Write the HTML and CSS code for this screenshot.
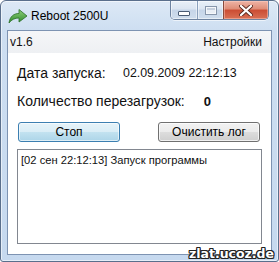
FILE: index.html
```html
<!DOCTYPE html>
<html lang="ru">
<head>
  <meta charset="UTF-8" />
  <title>Reboot 2500U</title>
  <link rel="stylesheet" href="styles.css">
</head>
<body>

  <div class="window">
    <div class="titlebar">
      <svg class="app-icon" width="20" height="16" viewBox="0 0 20 16">
        <defs>
          <linearGradient id="arrowFill" x1="0" y1="0" x2="0" y2="1">
            <stop offset="0" stop-color="#8fd07a"/>
            <stop offset="1" stop-color="#2f8a2c"/>
          </linearGradient>
        </defs>
        <path d="M1 15 C2 8 6 5.5 11 5.5 L11 1.5 L19 8 L11 14 L11 10 C7 10 3.5 11.5 1 15 Z" fill="url(#arrowFill)" stroke="#2b6e28" stroke-width="0.8" stroke-linejoin="round"/>
      </svg>
      <span class="title">Reboot 2500U</span>

      <div class="caption-buttons">
        <div class="cap-btn cap-min"><span class="glyph-min"></span></div>
        <div class="cap-btn cap-max"><span class="glyph-max"></span></div>
        <div class="cap-btn cap-close">
          <svg width="14" height="11" viewBox="0 0 14 11">
            <path d="M2 1 L12 10 M12 1 L2 10" stroke="#5a2a20" stroke-width="4" stroke-linecap="round"/>
            <path d="M2 1 L12 10 M12 1 L2 10" stroke="#ffffff" stroke-width="2.3" stroke-linecap="round"/>
          </svg>
        </div>
      </div>
    </div>

    <div class="client">
      <div class="menubar">
        <span class="menu-item">v1.6</span>
        <span class="menu-item">Настройки</span>
      </div>

      <div class="info">
        <div class="info-row">
          <span class="label label-date">Дата запуска:</span>
          <span class="date">02.09.2009 22:12:13</span>
        </div>
        <div class="info-row">
          <span class="label">Количество перезагрузок:</span>
          <span class="count">0</span>
        </div>
      </div>

      <div class="actions">
        <button class="btn btn-default">Стоп</button>
        <button class="btn">Очистить лог</button>
      </div>

      <div class="log">[02 сен 22:12:13] Запуск программы</div>
    </div>

    <div class="watermark">zlat.ucoz.de</div>
  </div>

</body>
</html>
```

FILE: styles.css
```css
* {
  box-sizing: border-box;
}

body {
  margin: 0;
  background: #ffffff;
  font-family: 'Liberation Sans', Arial, sans-serif;
  color: #111;
}

.window {
  position: relative;
  width: 279px;
  height: 262px;
  border: 1px solid #5a6f8c;
  border-radius: 6px 6px 3px 3px;
  background: linear-gradient(#dde9f6 0px, #cddef1 30px, #c6d9ef 100%);
  box-shadow: inset 0 0 0 1px rgba(255, 255, 255, 0.55);
  display: flex;
  flex-direction: column;
  overflow: hidden;
}

.titlebar {
  height: 29px;
  display: flex;
  align-items: center;
  padding-left: 7px;
}

.app-icon {
  margin-top: 1px;
}

.title {
  margin-left: 3px;
  font-size: 12px;
  color: #000;
}

/* caption buttons */

.caption-buttons {
  margin-left: auto;
  margin-right: 9px;
  align-self: flex-start;
  display: flex;
  height: 19px;
  border: 1px solid #6e83a0;
  border-top: none;
  border-radius: 0 0 5px 5px;
  overflow: hidden;
  box-shadow: 0 1px 0 rgba(255, 255, 255, 0.6);
}

.cap-btn {
  height: 18px;
  display: flex;
  align-items: center;
  justify-content: center;
  background: linear-gradient(#e9f0f8 0%, #dbe5f1 45%, #c6d5e8 50%, #cfdded 100%);
  box-shadow: inset 0 0 0 1px rgba(255, 255, 255, 0.5);
}

.cap-min {
  width: 27px;
  border-right: 1px solid #8aa0bc;
}

.cap-max {
  width: 26px;
  border-right: 1px solid #8a4a3c;
}

.cap-close {
  width: 44px;
  background: linear-gradient(#eeb4a6 0%, #de8c76 45%, #cb4c33 50%, #d87055 100%);
  box-shadow: inset 0 0 0 1px rgba(255, 210, 200, 0.45);
}

.glyph-min {
  width: 12px;
  height: 5px;
  margin-top: 6px;
  background: #fff;
  border: 1px solid #4b5c74;
  border-radius: 1px;
}

.glyph-max {
  width: 12px;
  height: 9px;
  border: 1px solid #8796ab;
  background: #e9eef5;
  box-shadow: inset 0 0 0 1px #f5f7fa, inset 0 2px 0 1px #c6d0de;
}

/* client area */

.client {
  margin: 0 6px 6px 6px;
  border: 1px solid #7d93b2;
  background: #ffffff;
  height: 225px;
  display: flex;
  flex-direction: column;
}

.menubar {
  height: 22px;
  display: flex;
  align-items: center;
  justify-content: space-between;
  padding: 0 9px 0 2px;
  background: linear-gradient(#f5f6f8, #eef0f3);
  font-size: 12px;
}

.info {
  padding: 10px 9px 0 9px;
  display: flex;
  flex-direction: column;
  gap: 8px;
}

.info-row {
  height: 20px;
  display: flex;
  align-items: center;
}

.label {
  font-size: 14px;
}

.label-date {
  width: 106px;
}

.date {
  font-size: 12.4px;
}

.count {
  margin-left: 19px;
  font-size: 13px;
  font-weight: bold;
}

.actions {
  margin-top: 11px;
  padding: 0 11px 0 10px;
  display: flex;
  justify-content: space-between;
}

.btn {
  width: 102px;
  height: 20px;
  padding: 0;
  font-family: 'Liberation Sans', Arial, sans-serif;
  font-size: 12px;
  color: #000;
  border: 1px solid #707070;
  border-radius: 3px;
  background: linear-gradient(#f2f2f2 0%, #ebebeb 50%, #dddddd 50%, #cfcfcf 100%);
  box-shadow: inset 0 0 0 1px rgba(255, 255, 255, 0.7);
}

.btn-default {
  border-color: #3c7fb1;
  background: linear-gradient(#e6f3f9 0%, #d9edf6 50%, #c3e2f0 50%, #acd5e8 100%);
  box-shadow: inset 0 0 0 1px rgba(255, 255, 255, 0.6);
}

.log {
  margin: 7px 9px 0 9px;
  height: 95px;
  border: 1px solid #828790;
  padding: 4px 3px;
  font-size: 11.2px;
  background: #fff;
}

.watermark {
  position: absolute;
  right: 4px;
  bottom: 0;
  font-family: 'DejaVu Sans', sans-serif;
  font-weight: bold;
  font-size: 12.5px;
  color: #fff;
  text-shadow: 1px 0 0 #222, -1px 0 0 #222, 0 1px 0 #222, 0 -1px 0 #222,
               1px 1px 0 #222, -1px -1px 0 #222, 1px -1px 0 #222, -1px 1px 0 #222;
}
```
